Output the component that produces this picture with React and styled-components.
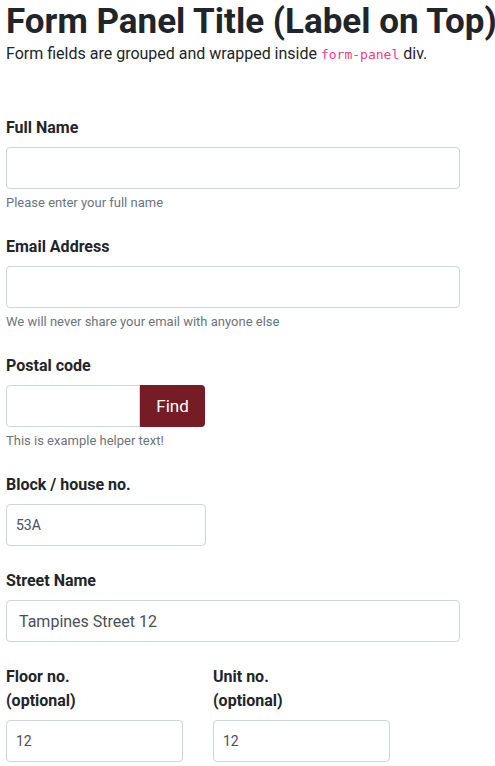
import React from "react";
import styled, { createGlobalStyle } from "styled-components";

const Global = createGlobalStyle`
  * { box-sizing: border-box; }
  body {
    margin: 0;
    font-family: Roboto, "Liberation Sans", sans-serif;
    color: #212529;
    background: #fff;
  }
`;

const Page = styled.div`
  padding: 0 6px;
`;

const Title = styled.h1`
  margin: 0;
  font-size: 35px;
  font-weight: 700;
  line-height: 44px;
  white-space: nowrap;
`;

const Lead = styled.p`
  margin: 0;
  font-size: 16px;
  line-height: 20px;
`;

const Code = styled.code`
  font-family: "DejaVu Sans Mono", "Liberation Mono", monospace;
  font-size: 13px;
  color: #e83e8c;
`;

const Panel = styled.div`
  margin-top: 51px;
  display: flex;
  flex-direction: column;
`;

const Field = styled.div`
  display: flex;
  flex-direction: column;
  margin-bottom: ${(p) => (p.$helper ? 24 : 23)}px;
`;

const Row = styled.div`
  display: flex;
  gap: 30px;
`;

const Label = styled.label`
  font-size: 16px;
  font-weight: 700;
  line-height: 24px;
  margin-bottom: 7px;
  width: ${(p) => p.$w || "auto"};
`;

const Input = styled.input`
  display: block;
  width: ${(p) => p.$w || "454px"};
  height: 42px;
  border: 1px solid #ced4da;
  border-radius: 4px;
  padding: 0 ${(p) => (p.$large ? 12 : 9)}px;
  font-family: Roboto, "Liberation Sans", sans-serif;
  font-size: ${(p) => (p.$large ? 16 : 14)}px;
  color: #495057;
  outline: none;
  background: #fff;
`;

const Group = styled.div`
  display: flex;
`;

const GroupInput = styled(Input)`
  border-top-right-radius: 0;
  border-bottom-right-radius: 0;
`;

const Button = styled.button`
  width: 65px;
  height: 42px;
  border: none;
  border-radius: 0 4px 4px 0;
  background: #761c25;
  color: #fff;
  font-family: Roboto, "Liberation Sans", sans-serif;
  font-size: 17px;
  padding: 0;
`;

const Helper = styled.small`
  display: block;
  margin-top: 6px;
  font-size: 13px;
  line-height: 16px;
  color: #6c757d;
`;

export default function App() {
  return (
    <Page>
      <Global />
      <Title>Form Panel Title (Label on Top)</Title>
      <Lead>
        Form fields are grouped and wrapped inside <Code>form-panel</Code> div.
      </Lead>
      <Panel>
        <Field $helper>
          <Label>Full Name</Label>
          <Input />
          <Helper>Please enter your full name</Helper>
        </Field>
        <Field $helper>
          <Label>Email Address</Label>
          <Input />
          <Helper>We will never share your email with anyone else</Helper>
        </Field>
        <Field $helper>
          <Label>Postal code</Label>
          <Group>
            <GroupInput $w="134px" />
            <Button>Find</Button>
          </Group>
          <Helper>This is example helper text!</Helper>
        </Field>
        <Field>
          <Label>Block / house no.</Label>
          <Input $w="200px" defaultValue="53A" />
        </Field>
        <Field>
          <Label>Street Name</Label>
          <Input $large defaultValue="Tampines Street 12" />
        </Field>
        <Row>
          <Field>
            <Label $w="177px">
              Floor no.
              <br />
              (optional)
            </Label>
            <Input $w="177px" defaultValue="12" />
          </Field>
          <Field>
            <Label $w="177px">
              Unit no.
              <br />
              (optional)
            </Label>
            <Input $w="177px" defaultValue="12" />
          </Field>
        </Row>
      </Panel>
    </Page>
  );
}
